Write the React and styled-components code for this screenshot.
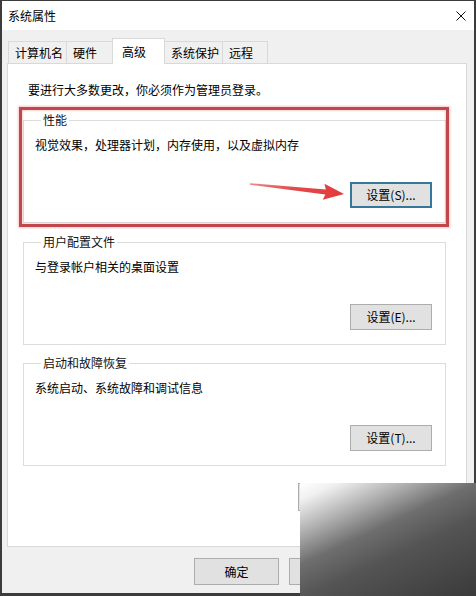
import React from "react";
import styled, { createGlobalStyle } from "styled-components";

const GlobalStyle = createGlobalStyle`
  html, body {
    margin: 0;
    padding: 0;
    background: #ffffff;
  }
  body {
    font-family: "Noto Sans CJK SC", "Microsoft YaHei", "Noto Sans", sans-serif;
    font-size: 12px;
    color: #000;
  }
  * { box-sizing: border-box; }
`;

const Frame = styled.div`
  position: relative;
  width: 476px;
  height: 596px;
  padding: 1px 2px 3px 2px;
  background: #3c3c3c;
`;

const Window = styled.div`
  display: flex;
  flex-direction: column;
  height: 100%;
  background: #f0f0f0;
`;

const TitleBar = styled.div`
  display: flex;
  align-items: center;
  justify-content: space-between;
  height: 29px;
  padding: 0 8px 0 6px;
  background: #ffffff;
  font-size: 12px;
  line-height: 16px;
`;

const Body = styled.div`
  display: flex;
  flex-direction: column;
  padding: 8px 7px 0 5px;
`;

const TabRow = styled.div`
  position: relative;
  z-index: 1;
  display: flex;
  align-items: flex-end;
  height: 26px;
  margin-bottom: -1px;
  padding-left: 1px;
`;

const Tab = styled.div`
  display: flex;
  align-items: center;
  width: ${(p) => p.$w}px;
  height: ${(p) => (p.$active ? 26 : 22)}px;
  margin-bottom: ${(p) => (p.$active ? 0 : 1)}px;
  padding: 0 ${(p) => (p.$active ? 9 : 6)}px;
  border: 1px solid #d9d9d9;
  border-bottom: 0;
  background: ${(p) => (p.$active ? "#ffffff" : "#f0f0f0")};
  line-height: 16px;
  white-space: nowrap;
  & + & {
    margin-left: -1px;
  }
`;

const Panel = styled.div`
  display: flex;
  flex-direction: column;
  height: 484px;
  padding: 18px 20px 0 15px;
  background: #ffffff;
  border: 1px solid #d9d9d9;
`;

const Intro = styled.div`
  height: 16px;
  margin: 0 0 14px 5px;
  line-height: 16px;
`;

const Group = styled.fieldset`
  min-width: 0;
  margin: ${(p) => p.$gap}px 0 0 0;
  padding: 9px 13px 14px 11px;
  border: 1px solid #dcdcdc;
`;

const GroupTitle = styled.legend`
  margin-left: 6px;
  padding: 0 2px;
  line-height: 16px;
  color: #111;
`;

const Description = styled.div`
  height: 16px;
  line-height: 16px;
`;

const ButtonRow = styled.div`
  display: flex;
  justify-content: flex-end;
  margin-top: ${(p) => p.$top}px;
`;

const Button = styled.button`
  display: flex;
  align-items: center;
  justify-content: center;
  width: ${(p) => p.$w}px;
  height: ${(p) => p.$h}px;
  padding: 0;
  font-family: inherit;
  font-size: 12px;
  line-height: 16px;
  color: #000;
  background: #e1e1e1;
  border: ${(p) => (p.$focused ? "2px solid #35789a" : "1px solid #adadad")};
  border-radius: 0;
`;

const Footer = styled.div`
  display: flex;
  justify-content: flex-end;
  gap: 10px;
  margin-top: 11px;
  padding-right: 5px;
`;

/* annotation drawn on top of the dialog */
const Highlight = styled.div`
  position: absolute;
  left: 19px;
  top: 107px;
  width: 430px;
  height: 120px;
  border: 3px solid #c2474c;
  box-shadow: 0 0 2px 1px rgba(235, 130, 130, 0.45),
    inset 0 0 2px 1px rgba(235, 130, 130, 0.35);
  pointer-events: none;
`;

const Pointer = styled.svg`
  position: absolute;
  left: 246px;
  top: 178px;
  width: 102px;
  height: 26px;
  pointer-events: none;
`;

const CornerShade = styled.div`
  position: absolute;
  left: 300px;
  top: 483px;
  right: 0;
  bottom: 0;
  background: linear-gradient(
    155deg,
    #ffffff 0%,
    #f0f0f0 9%,
    #b6b6b6 24%,
    #6e6e6e 42%,
    #545454 60%,
    #3a3a3a 100%
  );
  pointer-events: none;
`;

const CloseIcon = () => (
  <svg width="10" height="10" viewBox="0 0 10 10" aria-hidden="true">
    <path d="M0.5 0.5 L9.5 9.5 M9.5 0.5 L0.5 9.5" stroke="#111" strokeWidth="1" fill="none" />
  </svg>
);

const tabs = [
  { label: "计算机名", w: 59 },
  { label: "硬件", w: 47 },
  { label: "高级", w: 53, active: true },
  { label: "系统保护", w: 59 },
  { label: "远程", w: 46 },
];

const groups = [
  {
    title: "性能",
    text: "视觉效果，处理器计划，内存使用，以及虚拟内存",
    button: "设置(S)...",
    focused: true,
    gap: 0,
  },
  {
    title: "用户配置文件",
    text: "与登录帐户相关的桌面设置",
    button: "设置(E)...",
    gap: 11,
  },
  {
    title: "启动和故障恢复",
    text: "系统启动、系统故障和调试信息",
    button: "设置(T)...",
    gap: 10,
  },
];

export default function App() {
  return (
    <>
      <GlobalStyle />
      <Frame>
        <Window>
          <TitleBar>
            <span>系统属性</span>
            <CloseIcon />
          </TitleBar>
          <Body>
            <TabRow>
              {tabs.map((t) => (
                <Tab key={t.label} $w={t.w} $active={t.active}>
                  {t.label}
                </Tab>
              ))}
            </TabRow>
            <Panel>
              <Intro>要进行大多数更改，你必须作为管理员登录。</Intro>
              {groups.map((g) => (
                <Group key={g.title} $gap={g.gap}>
                  <GroupTitle>{g.title}</GroupTitle>
                  <Description>{g.text}</Description>
                  <ButtonRow $top={29}>
                    <Button $w={82} $h={26} $focused={g.focused}>
                      {g.button}
                    </Button>
                  </ButtonRow>
                </Group>
              ))}
              <ButtonRow $top={17}>
                <Button $w={148} $h={28}>环境变量(N)...</Button>
              </ButtonRow>
            </Panel>
          </Body>
          <Footer>
            <Button $w={85} $h={27}>确定</Button>
            <Button $w={85} $h={27}>取消</Button>
            <Button $w={85} $h={27}>应用(A)</Button>
          </Footer>
        </Window>
        <Highlight />
        <Pointer viewBox="0 0 102 26" aria-hidden="true">
          <defs>
            <linearGradient id="arrowFill" x1="0" y1="0" x2="1" y2="0">
              <stop offset="0" stopColor="#e98a8a" />
              <stop offset="0.45" stopColor="#e24b4b" />
              <stop offset="1" stopColor="#e3393c" />
            </linearGradient>
          </defs>
          <polygon
            points="4.07,5.3 79.86,11.55 78.45,5.87 98,16 76.75,21.79 79.34,16.53 3.93,6.7"
            fill="url(#arrowFill)"
          />
        </Pointer>
        <CornerShade />
      </Frame>
    </>
  );
}
